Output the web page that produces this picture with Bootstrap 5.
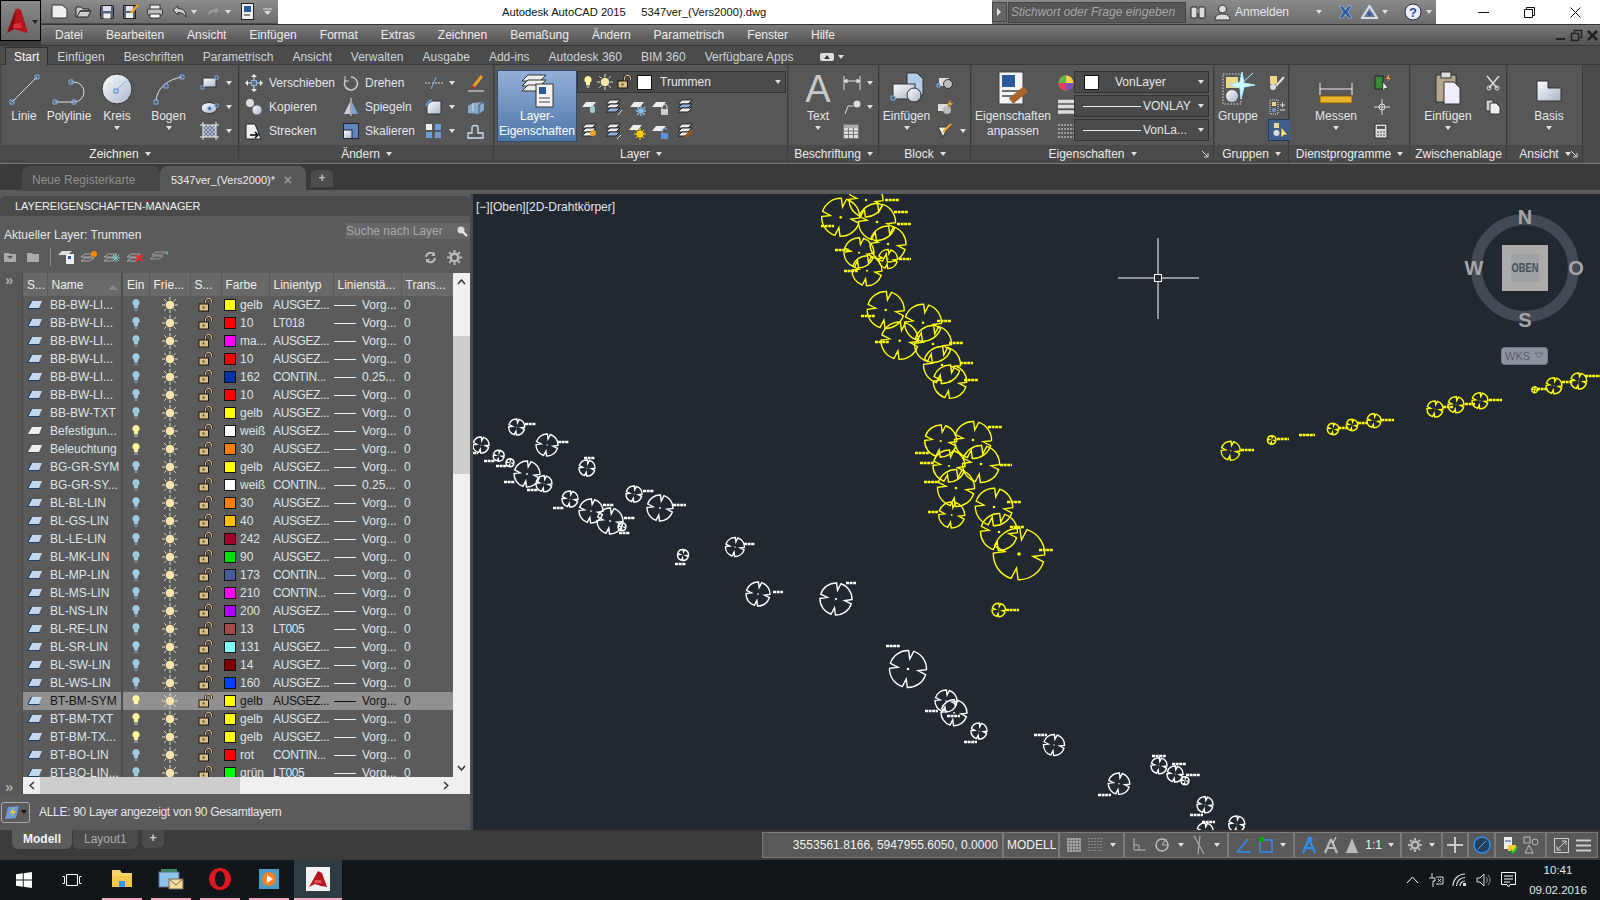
<!doctype html>
<html lang="de"><head><meta charset="utf-8"><title>Autodesk AutoCAD 2015</title>
<link href="https://cdn.jsdelivr.net/npm/bootstrap@5.3.0/dist/css/bootstrap.min.css" rel="stylesheet">
<style>
html,body{height:100%;overflow:hidden}
body{font:12px/16px "Liberation Sans","Noto Sans",sans-serif;background:#3b3b3b;color:#e4e6e8;width:1600px;height:900px}
svg{display:block;flex:none}
.crt{display:inline-block;width:0;height:0;border-left:3.5px solid transparent;border-right:3.5px solid transparent;border-top:4px solid #e0e0e0;flex:none}
.top{height:45px}
.appbtn{width:41px;height:41px;background:linear-gradient(#8a8a8a,#666);border:1px solid #000;flex:none}
.appbtn .crt{border-top-color:#222;margin-left:3px;margin-top:2px}
.tb1{height:24px;background:#fff}
.qat{width:237px;height:24px;background:linear-gradient(#8c8c8c,#6d6d6d);padding-left:6px;border-bottom:1px solid #4a4a4a}
.qs{width:24px;height:24px}
.ttl{color:#111;font-size:11.2px;padding-left:224px;width:714px;white-space:pre}
.srch{width:444px;height:24px;background:linear-gradient(#8a8a8a,#6c6c6c)}
.srbtn{width:15px;height:20px;background:#666;border:1px solid #444;margin-right:1px}
.srbtn b{display:block;width:0;height:0;border-left:4px solid #ddd;border-top:4px solid transparent;border-bottom:4px solid transparent;margin:5px 0 0 4px}
.sfld{width:178px;height:21px;background:#565656;border:1px solid #454545;font-style:italic;color:#a8a8a8;padding-left:2px;line-height:19px;white-space:nowrap;overflow:hidden}
.wctl{width:164px;height:24px;color:#111;padding-right:2px}
.wctl>div{width:46px}
.mnu{height:21px;background:linear-gradient(#7a7a7a,#515151);gap:23px;flex:1;border-top:1px solid #333;color:#ececec;padding-left:14px}
.mnuw{gap:4px;margin-left:auto;margin-right:2px}
.rtabs{height:20px;background:#4b4b4b;border-top:1px solid #383838;border-bottom:1px solid #383838;padding:3px 0 0 5px;gap:19px;color:#cfd5d8}
.rtab-on{background:#565656;color:#fff;border:1px solid #2e2e2e;border-bottom:0;padding:0 8px;height:19px;margin-right:-10px;margin-top:-1px;line-height:18px}
.rib{height:98px;background:#4b4b4b;padding-left:2px;gap:1px}
.pnl{background:#575757;border-right:1px solid #3d3d3d}
.pb{height:80px;padding-top:6px}
.pf{height:18px;background:#4a4a4a;gap:6px;color:#ebebeb;position:relative;line-height:18px;white-space:nowrap}
.corn{position:absolute;right:4px;top:5px}
.big{height:74px;flex:none;line-height:15px;text-align:center}
.big .bic{height:38px}
.big .crt{margin-top:2px}
.bglyph{font:38px/36px "Liberation Sans",sans-serif;color:#c8c8c8;height:38px}
.smc{gap:0;flex:none}
.sr{height:24px;gap:6px;white-space:nowrap}
.drp{height:22px;background:#4a4a4a;border:1px solid #333;margin-bottom:2px;padding:0 5px;position:relative;white-space:nowrap}
.drp1{margin-bottom:3px}
.drp .crt{position:absolute;right:4px;top:8px}
.sw0{width:15px;height:15px;background:#fff;border:1px solid #111;flex:none}
.lbtn{background:linear-gradient(#92b0d8,#4e76a8);border:1px solid #2f4b72;height:72px;color:#fff;margin:-1px 0 0 2px}
.actbtn{background:#3e5f8e;border:1px solid #27395a}
.w44{width:44px}.w46{width:46px}.w50{width:50px}.w53{width:53px}
.w98{width:98px}.w82{width:82px}.w42{width:42px}.w30{width:30px}
.p237{width:237px}.p254{width:254px}.p293{width:293px}.p90{width:90px}.p91{width:91px}.p242{width:242px}.p74{width:74px}.p120{width:120px}.p96{width:96px}.p75{width:75px}
.sq80{width:80px}.w212{width:209px}.w24{width:24px}.w20{width:20px}.w56{width:56px}.w34{width:34px}
.w60{width:60px}.w66{width:66px}.w26{width:26px}.w92{width:92px}
.ptl1{padding-left:3px}.ptl2{padding-left:5px}
.sl4{margin-left:4px}
.ml8n{margin-left:-8px}
.dtabs{height:27px;background:#3a3a3a;padding:2px 0 0 22px;border-top:1px solid #777}
.dt{height:25px;line-height:28px;border-radius:8px 8px 0 0}
.dt1{width:138px;background:#474747;color:#8f8f8f;padding-left:10px}
.dt2{width:146px;background:#585858;color:#eee;padding:0 14px 0 11px;font-size:11px}
.dt2 .cls{font-size:14px;color:#999;font-weight:700}
.dt3{width:22px;height:17px;margin:4px 0 0 5px;background:#4d4d4d;border-radius:5px 5px 0 0;color:#bbb;line-height:16px;text-align:center;font-weight:700}
.gstrip{height:4px;background:#5b5b5b}
.work{height:636px}
.lp{width:473px;flex:none;background:#5b5b5b;padding-top:2px;border-right:3px solid #4a4a4a}
.lpt{height:20px;background:#4a4a4a;border-radius:5px 5px 0 0;padding-left:15px;line-height:20px;color:#eee;font-size:11px;letter-spacing:-.1px}
.lph{height:30px;padding:7px 0 0 4px}
.lph>.akt{margin-top:4px}
.lps{width:124px;height:16px;background:#666;color:#a9a9a9;line-height:16px;margin-left:auto;position:relative}
.lps svg{position:absolute;right:2px;top:2px}
.lpb{height:27px;padding:0 0 5px 3px}
.lpb>span{width:23px}
.lpb>span.lsep{width:1px;height:18px;margin:0 6px 0 1px;background:#8a8a8a}
.gut{width:23px;background:#575757;border-right:1px solid #4c4c4c;color:#aaa;font-weight:700;font-size:15px;line-height:14px;height:521px}
.gut .g1{padding:0 0 0 5px;height:14px}
.lwin{height:504px;width:430px;overflow:hidden;flex:none}
.vsb{width:17px;height:504px;background:#f0f0f0;position:relative}
.vth{position:absolute;left:0;right:0;top:63px;height:138px;background:#cdcdcd}
.arw{position:absolute;left:4px;top:6px}
.arw2{position:absolute;left:4px;bottom:6px}
.hsb{height:17px;width:447px;background:#f0f0f0;position:relative}
.hth{position:absolute;left:17px;top:0;bottom:0;width:200px;background:#cdcdcd}
.arh1{position:absolute;left:6px;top:4px}.arh2{position:absolute;right:21px;top:4px}
.lyr.table{table-layout:fixed;width:430px;margin:0;--bs-table-bg:transparent;border:0}
.lyr.table th,.lyr.table td{padding:0;border:0;background:transparent;white-space:nowrap;overflow:hidden;vertical-align:middle;box-shadow:none}
.lyr.table td{height:18px;line-height:18px;color:#dde5ea;font-weight:400}
.lyr.table th{height:23px;background:#696969;color:#eee;font-weight:400;border-right:1px solid #5a5a5a;padding-left:4px}
.lyr.table td svg{margin:auto}
.lyr.table td.nm{padding-left:3px}
.lyr.table td.cdv,.lyr.table th.cdv{border-left:2px solid #4c4c4c}
.lyr.table td.cl{padding-left:3px}
.lyr.table td.lt{padding-left:4px;letter-spacing:-.35px}
.lyr.table td.lw{padding-left:1px}
.lyr.table td.tr0{padding-left:3px}
.lyr.table tr.sel td{background:#909090;color:#141414}
.sortm{float:right;margin:8px 3px 0 0;border-left:5px solid transparent;border-right:5px solid transparent;border-bottom:5px solid #888;width:0;height:0}
.sw{display:inline-block;width:12px;height:12px;border:1px solid #111;vertical-align:-2px;margin-right:4px}
.ln{display:inline-block;width:22px;height:0;border-top:1px solid #f0f0f0;vertical-align:3px;margin-right:6px}
.ln2{display:inline-block;width:58px;height:0;border-top:1px solid #f0f0f0;margin:0 2px 0 3px;flex:none}
tr.sel .ln{border-top-color:#111}
.sy{background:#ff0}.sr0{background:#f00}.sm{background:#f0f}.sw1{background:#fff}.s162{background:#0033a8}.s30{background:#ff7f00}.s40{background:#ffbf00}.s242{background:#a5002c}.s90{background:#00e000}.s173{background:#4a5a9a}.s210{background:#f0f}.s200{background:#b000ff}.s13{background:#a04a4a}.s131{background:#7fffff}.s14{background:#7f0000}.s160{background:#0040ff}.sg{background:#0f0}
.lpst{height:36px;padding-left:1px;gap:9px;letter-spacing:-.3px}
.fbtn{width:29px;height:21px;background:#5b5b5b;border:1px solid #aaa;border-radius:3px;padding-left:2px;gap:1px}
.fbtn .crt{border-top-color:#111}
.cnv{position:relative;flex:1;background:#212830;overflow:hidden}
.cnv svg text{font-family:"Liberation Sans",sans-serif}
.lrow{height:30px;background:#3b3b3b}
.ltab{height:17px;margin-top:2px;line-height:17px}
.lt1{width:60px;margin-left:12px;background:#5c5c5c;color:#f2f2f2;font-weight:700;text-align:center;border-radius:0 0 6px 6px;height:19px;margin-top:0;line-height:19px}
.lt2{width:65px;margin-left:1px;background:#4b4b4b;color:#aaa;padding-left:11px;border-radius:0 0 6px 6px;height:19px;margin-top:0;line-height:19px}
.lt3{width:22px;margin-left:4px;background:#4b4b4b;border-radius:0 0 5px 5px;text-align:center;font-weight:700;color:#ccc;height:18px;margin-top:0}
.sbar{height:26px;background:#595959;margin:2px 2px 0 0;border:1px solid #7a7a7a;color:#f2f2f2;white-space:nowrap}
.sg1{height:100%;border-right:2px solid #7a7a7a;justify-content:space-around;padding:0 3px;align-items:center;display:flex;flex:none}
.sg1:last-child{border-right:0}
.w241{width:241px;justify-content:flex-end!important;padding-right:4px!important;letter-spacing:.05px}.w55{width:56px}.w63{width:65px}.w104{width:104px}.w64{width:66px}.w106{width:107px}.w40{width:41px}.w25{width:26px}.w27{width:27px}.w51{width:51px}.w49{width:50px}
.tbar{height:40px;background:#101619}
.tslot{width:48px}
.tapp{width:40px;margin-right:9px;height:40px;border-bottom:2px solid #f4a9c2}
.tmg{margin-left:6px}
.tcur{width:48px;margin-left:-4px;background:#2f3c42;margin-right:0}
.try{width:24px}
.clk{width:66px;margin:0 9px 0 5px;font-size:11.5px;line-height:20px;text-align:center;color:#e8e8e8}
.ylw{color:#ff0}.c1{width:24px}.c2{width:75px}.c3{width:27px}.c4{width:41px}.c5{width:31px}.c6{width:48px}.c7{width:64px}.c8{width:68px}.c9{width:52px}
</style></head><body>
<svg width="0" height="0" class="position-absolute"><defs>
<symbol id="ly" viewBox="0 0 16 10"><polygon points="5,1 15,1 12,8 1,8" fill="#c3d8ef"/><path d="M1 8.5H12.5M4.500 1 .8 8" stroke="#17406f" stroke-width="1.100" fill="none"/></symbol>
<symbol id="lyw" viewBox="0 0 16 10"><polygon points="5,1 15,1 12,8 1,8" fill="#eee"/><path d="M1 8.500H12.500" stroke="#444" fill="none"/></symbol>
<symbol id="bb" viewBox="0 0 10 14"><path d="M5 1a3.700 3.700 0 0 1 2 6.800V10H3V7.800A3.700 3.700 0 0 1 5 1z" fill="#9ccbe6"/><rect x="3.500" y="10" width="3" height="3" fill="#7a8a96"/></symbol>
<symbol id="by" viewBox="0 0 10 14"><path d="M5 1a3.700 3.700 0 0 1 2 6.800V10H3V7.800A3.700 3.700 0 0 1 5 1z" fill="#fff6a0"/><rect x="3.500" y="10" width="3" height="3" fill="#999"/></symbol>
<symbol id="sn" viewBox="0 0 16 16"><path d="M8 0V3M8 13V16M0 8H3M13 8H16M2.300 2.300 4.400 4.400M11.600 11.600 13.700 13.700M2.300 13.700 4.400 11.600M11.600 4.400 13.700 2.300" stroke="#ddd"/><circle cx="8" cy="8" r="4.300" fill="#f6e6ac"/></symbol>
<symbol id="lk" viewBox="0 0 16 14"><path d="M7.500 6V3.500A3 3 0 0 1 13.500 3.500V5" fill="none" stroke="#111" stroke-width="2.600"/><path d="M7.500 6V3.500A3 3 0 0 1 13.500 3.500V5" fill="none" stroke="#d9c08c" stroke-width="1.200"/><rect x="1" y="6" width="9.500" height="7" fill="#d9c08c" stroke="#1c1408"/><rect x="4.500" y="8.500" width="2" height="2" fill="#5a4a20"/></symbol>
<g id="tr"><path vector-effect="non-scaling-stroke" fill="none" stroke="currentColor" stroke-width="1.400" d="M30.900-95.100A100 100 0 0 1 99.900 3.500L54.200 9.600 95.100 30.900A100 100 0 0 1-3.500 99.900L-9.600 54.200-30.900 95.100A100 100 0 0 1-99.900-3.500L-54.200-9.600-95.100-30.900A100 100 0 0 1 3.500-99.900L9.600-54.200Z"/><circle r="7" fill="currentColor"/></g>
<linearGradient id="gd" x1="0" y1="0" x2="1" y2="1"><stop offset="0" stop-color="#fff"/><stop offset="1" stop-color="#a8b4c8"/></linearGradient>
</defs></svg>

<div class="d-flex top">
 <div class="appbtn d-flex align-items-center ps-1">
  <svg width="24" height="28" viewBox="0 0 24 28"><polygon points="12,1 16,3 23,26 15,24 9,22 2,26" fill="#b4161b"/><polygon points="11,1 2,26 9,22" fill="#8a0d12"/><polygon points="9,17 16,16 17,21 8,21" fill="#d9313a"/></svg>
  <span class="crt"></span>
 </div>
 <div class="flex-grow-1 d-flex flex-column">
  <div class="d-flex tb1">
   <div class="qat d-flex align-items-center">
    <span class="qs d-flex align-items-center justify-content-center"><svg width="17" height="17" viewBox="0 0 17 17"><path d="M1 2H11L16 6V15H1Z" fill="#eee" stroke="#333"/></svg></span>
    <span class="qs d-flex align-items-center justify-content-center"><svg width="17" height="14" viewBox="0 0 17 14"><path d="M1 2H6L8 4H14V6H5L2 12H1ZM5 6H16L13 12H2" fill="#ccc" stroke="#222"/></svg></span>
    <span class="qs d-flex align-items-center justify-content-center"><svg width="14" height="14" viewBox="0 0 14 14"><rect x=".5" y=".5" width="13" height="13" rx="1" fill="#567" stroke="#222"/><rect x="3" y="1" width="8" height="5" fill="#dde"/><rect x="3.500" y="8.500" width="7" height="5" fill="#eee"/></svg></span>
    <span class="qs d-flex align-items-center justify-content-center"><svg width="16" height="15" viewBox="0 0 16 15"><rect x=".5" y="1.500" width="12" height="13" fill="#567" stroke="#222"/><rect x="3" y="2" width="7" height="5" fill="#dde"/><rect x="3" y="9" width="7" height="5" fill="#eee"/><path d="M8 9 15 1" stroke="#f0a020" stroke-width="2.500"/></svg></span>
    <span class="qs d-flex align-items-center justify-content-center"><svg width="16" height="15" viewBox="0 0 16 15"><rect x="3" y="1" width="10" height="5" fill="#eee" stroke="#333"/><rect x=".5" y="5" width="15" height="6" rx="1" fill="#bbb" stroke="#333"/><rect x="3" y="10" width="10" height="4" fill="#fff" stroke="#333"/></svg></span>
    <span class="qs d-flex align-items-center justify-content-center"><svg width="15" height="13" viewBox="0 0 15 13"><path d="M1 5 6 1V3.500C12 3.500 14 7 14 12 12 9 10 7.500 6 7.500V10Z" fill="#ccc" stroke="#333"/></svg></span>
    <span class="crt"></span><span class="qs sl4 d-flex align-items-center justify-content-center"><svg width="15" height="13" viewBox="0 0 15 13"><path d="M14 5 9 1V3.500C3 3.500 1 7 1 12 3 9 5 7.500 9 7.500V10Z" fill="#999" stroke="#777"/></svg></span>
    <span class="crt"></span><span class="qs sl4 d-flex align-items-center justify-content-center"><svg width="13" height="17" viewBox="0 0 13 17"><rect x=".5" y=".5" width="12" height="16" fill="#eee" stroke="#222"/><rect x="3" y="3" width="7" height="6" fill="#2a5a9a"/><path d="M3 12H9" stroke="#222"/></svg></span>
    <span class="d-flex flex-column align-items-center ms-1"><svg width="9" height="8" viewBox="0 0 9 8"><path d="M0 1H9" stroke="#ddd"/><path d="M1 3H8L4.500 7Z" fill="#ddd"/></svg></span>
   </div>
   <div class="ttl d-flex align-items-center">Autodesk AutoCAD 2015     5347ver_(Vers2000).dwg</div>
   <div class="srch d-flex align-items-center">
    <div class="srbtn"><b></b></div>
    <div class="sfld">Stichwort oder Frage eingeben</div>
    <span class="ms-1 me-2"><svg width="16" height="16" viewBox="0 0 16 16"><rect x="1" y="3" width="6" height="11" rx="1" fill="#ddd" stroke="#222"/><rect x="9" y="3" width="6" height="11" rx="1" fill="#ddd" stroke="#222"/><rect x="6" y="5" width="4" height="4" fill="#888"/></svg></span>
    <span><svg width="17" height="17" viewBox="0 0 17 17"><circle cx="8.500" cy="5" r="4" fill="#ddd" stroke="#333"/><path d="M1 16C1 11 5 10 8.500 10S16 11 16 16Z" fill="#ddd" stroke="#333"/></svg></span>
    <span class="ms-1">Anmelden</span>
    <span class="crt ms-auto"></span>
    <span class="ms-3"><svg width="15" height="14" viewBox="0 0 15 14"><path d="M1 1H5L7.500 5 10 1H14L9.800 7 14 13H10L7.500 9 5 13H1L5.200 7Z" fill="#2b5ca8" stroke="#c8d8ea" stroke-width=".5"/></svg></span>
    <span class="ms-2"><svg width="17" height="15" viewBox="0 0 17 15"><path d="M8.500 1 16 13H1Z" fill="none" stroke="#cfe0f5" stroke-width="2.200"/><circle cx="8.500" cy="9" r="2" fill="#2b5ca8"/></svg></span>
    <span class="crt ms-1"></span>
    <span class="ms-3"><svg width="18" height="18" viewBox="0 0 18 18"><circle cx="9" cy="9" r="8" fill="#eef" stroke="#234"/><text x="9" y="14" text-anchor="middle" font-size="13" font-weight="700" fill="#1f4fa0" font-family="Liberation Sans">?</text></svg></span>
    <span class="crt ms-1 me-1"></span>
   </div>
   <div class="wctl d-flex align-items-center justify-content-end">
    <div class="d-flex justify-content-center"><svg width="11" height="11" viewBox="0 0 11 11"><path d="M0 5.500H11" stroke="#111"/></svg></div>
    <div class="d-flex justify-content-center"><svg width="11" height="11" viewBox="0 0 11 11"><path d="M.5 2.500H8.500V10.500H.5ZM2.500 2.500V.5H10.500V8.500H8.500" fill="none" stroke="#111"/></svg></div>
    <div class="d-flex justify-content-center"><svg width="11" height="11" viewBox="0 0 11 11"><path d="M.5.5 10.500 10.500M10.500.5 .5 10.500" stroke="#111"/></svg></div>
   </div>
  </div>
  <div class="mnu d-flex align-items-center">
   <span>Datei</span><span>Bearbeiten</span><span>Ansicht</span><span>Einfügen</span><span>Format</span><span>Extras</span><span>Zeichnen</span><span>Bemaßung</span><span>Ändern</span><span>Parametrisch</span><span>Fenster</span><span>Hilfe</span>
   <span class="d-flex mnuw align-items-center"><svg width="11" height="11" viewBox="0 0 11 11"><path d="M1 9H10" stroke="#222" stroke-width="2"/></svg><svg width="13" height="13" viewBox="0 0 13 13"><path d="M1.500 4.500H8.500V11.500H1.500ZM4.500 4.500V1.500H11.500V8.500H8.500" fill="none" stroke="#222" stroke-width="1.500"/></svg><svg width="11" height="11" viewBox="0 0 11 11"><path d="M1 1 10 10M10 1 1 10" stroke="#222" stroke-width="2.500"/></svg></span>
  </div>
 </div>
</div>
<div class="rtabs d-flex align-items-center">
 <span class="rtab-on">Start</span><span>Einfügen</span><span>Beschriften</span><span>Parametrisch</span><span>Ansicht</span><span>Verwalten</span><span>Ausgabe</span><span>Add-ins</span><span>Autodesk 360</span><span>BIM 360</span><span>Verfügbare Apps</span>
 <span class="d-flex align-items-center gap-1 ms-2"><svg width="14" height="8" viewBox="0 0 14 8"><rect width="14" height="8" rx="2" fill="#ddd"/><path d="M7 2 10 6H4Z" fill="#333"/></svg><span class="crt"></span></span>
</div>
<div class="rib d-flex">
 <div class="pnl p237"><div class="pb d-flex">
  <div class="big w44 d-flex flex-column align-items-center"><div class="bic"><svg width="36" height="36" viewBox="0 0 36 36"><path d="M6 31 31 6" stroke="#ddd"/><path d="M4 29h4v4H4zM29 4h4v4h-4z" fill="none" stroke="#7fb2f0"/></svg></div><span>Linie</span></div>
  <div class="big w46 d-flex flex-column align-items-center"><div class="bic"><svg width="36" height="36" viewBox="0 0 36 36"><path d="M4 31H23A10 10 0 0 0 23 11H20" stroke="#ddd" fill="none"/><path d="M2 29h4v4H2zM21 29h4v4h-4zM18 9h4v4h-4z" fill="none" stroke="#7fb2f0"/></svg></div><span>Polylinie</span></div>
  <div class="big w50 d-flex flex-column align-items-center"><div class="bic"><svg width="36" height="36" viewBox="0 0 36 36"><circle cx="18" cy="18" r="15" fill="url(#gd)" stroke="#333"/><path d="M17 20 27 10" stroke="#7fb2f0"/><path d="M15 18h4v4h-4z" fill="none" stroke="#4b86d8"/></svg></div><span>Kreis</span><span class="crt"></span></div>
  <div class="big w53 d-flex flex-column align-items-center"><div class="bic"><svg width="36" height="36" viewBox="0 0 36 36"><path d="M5 30C6 16 18 8 31 6" stroke="#ddd" fill="none"/><path d="M3 29h4v4H3zM13 13h4v4h-4zM29 4h4v4h-4z" fill="none" stroke="#7fb2f0"/></svg></div><span>Bogen</span><span class="crt"></span></div>
  <div class="smc ptl2">
   <div class="sr d-flex align-items-center"><svg width="20" height="18" viewBox="0 0 20 18"><rect x="3" y="4" width="13" height="9" fill="url(#gd)" stroke="#333"/><path d="M1 12h3v3H1zM15 2h3v3h-3z" fill="#444" stroke="#7fb2f0"/></svg><span class="crt"></span></div>
   <div class="sr d-flex align-items-center"><svg width="20" height="18" viewBox="0 0 20 18"><ellipse cx="9" cy="10" rx="8" ry="5.500" fill="url(#gd)" stroke="#333"/><path d="M8 9h3v3H8zM15 6h3v3h-3z" fill="#444" stroke="#7fb2f0"/></svg><span class="crt"></span></div>
   <div class="sr d-flex align-items-center"><svg width="20" height="18" viewBox="0 0 20 18"><rect x="3" y="3" width="13" height="12" fill="#a9b8d8"/><path d="M3 7 7 3M3 11 11 3M3 15 15 3M7 15 16 6M11 15 16 10M3 5 13 15M3 9 9 15M5 3 16 14M9 3 16 10" stroke="#555" stroke-width=".6"/><path d="M0 3H19M0 15H19M3 0V18M16 0V18" stroke="#eee"/></svg><span class="crt"></span></div>
  </div>
 </div><div class="pf d-flex justify-content-center align-items-center">Zeichnen <span class="crt"></span></div></div>
 <div class="pnl p254"><div class="pb d-flex ptl2">
  <div class="smc w98">
   <div class="sr d-flex align-items-center"><svg width="18" height="18" viewBox="0 0 18 18"><path d="M9 0 12 3H6ZM9 18 6 15H12ZM0 9 3 6V12ZM18 9 15 12V6Z" fill="#e8e8e8"/><path d="M9 3V15M3 9H15" stroke="#e8e8e8"/><rect x="6.500" y="6.500" width="5" height="5" fill="#6a6a6a" stroke="#7fb2f0"/></svg>Verschieben</div>
   <div class="sr d-flex align-items-center"><svg width="18" height="18" viewBox="0 0 18 18"><circle cx="5" cy="5" r="4" fill="#ddd"/><circle cx="12" cy="12" r="5" fill="url(#gd)" stroke="#667"/></svg>Kopieren</div>
   <div class="sr d-flex align-items-center"><svg width="18" height="18" viewBox="0 0 18 18"><path d="M1 2H10L16 17H1Z" fill="#eee" stroke="#222"/><path d="M5 13H13M10 10 13 13 10 16" stroke="#000" stroke-width="1.500" fill="none"/></svg>Strecken</div>
  </div>
  <div class="smc w82">
   <div class="sr d-flex align-items-center"><svg width="16" height="16" viewBox="0 0 16 16"><path d="M8 2A6.500 6.500 0 1 1 2.500 5" fill="none" stroke="#ccc" stroke-width="1.500"/><path d="M2 1V6H6" fill="none" stroke="#ccc"/></svg>Drehen</div>
   <div class="sr d-flex align-items-center"><svg width="16" height="18" viewBox="0 0 16 18"><path d="M8 0V18" stroke="#eee"/><path d="M7 4V16H1Z" fill="#ccd"/><path d="M9 4V16H15Z" fill="#7fa3cf"/></svg>Spiegeln</div>
   <div class="sr d-flex align-items-center"><svg width="16" height="16" viewBox="0 0 16 16"><rect x=".5" y=".5" width="15" height="15" fill="#5f86b8" stroke="#223"/><rect x=".5" y="7" width="8.500" height="8.500" fill="url(#gd)" stroke="#223"/></svg>Skalieren</div>
  </div>
  <div class="smc w42">
   <div class="sr d-flex align-items-center"><svg width="18" height="16" viewBox="0 0 18 16"><path d="M0 8H5M7 8H18" stroke="#ddd" stroke-dasharray="2 1"/><path d="M6 14 11 2" stroke="#7fb2f0"/></svg><span class="crt"></span></div>
   <div class="sr d-flex align-items-center"><svg width="18" height="16" viewBox="0 0 18 16"><path d="M2 15V9C2 5 5 2 9 2H16V15Z" fill="url(#gd)" stroke="#333"/><path d="M1 7C2 4 4 2 7 1" stroke="#5b93dc" stroke-width="2" fill="none"/></svg><span class="crt"></span></div>
   <div class="sr d-flex align-items-center"><svg width="18" height="16" viewBox="0 0 18 16"><rect x="1" y="1" width="6" height="6" fill="#eee"/><rect x="10" y="1" width="6" height="6" fill="#6f9ad8"/><rect x="1" y="9" width="6" height="6" fill="#6f9ad8"/><rect x="10" y="9" width="6" height="6" fill="#6f9ad8"/></svg><span class="crt"></span></div>
  </div>
  <div class="smc w30">
   <div class="sr d-flex align-items-center"><svg width="18" height="18" viewBox="0 0 18 18"><path d="M6 13 15 2" stroke="#f2a020" stroke-width="3"/><path d="M3 15 6 11 8 14Z" fill="#a33"/><path d="M1 17H17" stroke="#eee"/></svg></div>
   <div class="sr d-flex align-items-center"><svg width="18" height="16" viewBox="0 0 18 16"><path d="M1 7 6 4 17 3V11L12 15 1 14Z" fill="#8aa7cc"/><path d="M6 4V12" stroke="#ddd"/><path d="M12 6V15M12 6 17 3" stroke="#456" /></svg></div>
   <div class="sr d-flex align-items-center"><svg width="18" height="16" viewBox="0 0 18 16"><path d="M1 15V10H5V4C5 2 11 2 11 4V10H16V15Z" fill="none" stroke="#cfe0f5" stroke-width="1.300"/></svg></div>
  </div>
 </div><div class="pf d-flex justify-content-center align-items-center">Ändern <span class="crt"></span></div></div>
 <div class="pnl p293"><div class="pb d-flex">
  <div class="big lbtn sq80 d-flex flex-column align-items-center"><div class="bic"><svg width="36" height="38" viewBox="0 0 36 38"><g stroke="#333"><polygon points="9,4 27,4 21,10 3,10" fill="#eee"/><polygon points="9,9 27,9 21,15 3,15" fill="#eee"/><polygon points="9,14 27,14 21,20 3,20" fill="#eee"/></g><rect x="17" y="13" width="17" height="23" fill="#f4f4f4" stroke="#333"/><rect x="20" y="16" width="7" height="7" fill="#2a5a9a"/><path d="M20 27H31M20 31H31" stroke="#444"/></svg></div><span>Layer-</span><span>Eigenschaften</span></div>
  <div class="w212">
   <div class="drp drp1 d-flex align-items-center gap-1"><svg width="10" height="14"><use href="#by"/></svg><svg width="16" height="16"><use href="#sn"/></svg><svg width="16" height="14"><use href="#lk"/></svg><span class="sw0"></span><span class="ms-1">Trummen</span><span class="crt"></span></div>
   <div class="d-flex">
    <span class="w24 sr d-flex align-items-center justify-content-center"><svg width="20" height="18" viewBox="0 0 20 18"><polygon points="7,3 17,3 13,8 3,8" fill="#eee"/><rect x="11" y="7" width="5" height="7" rx="2" fill="#9cc"/></svg></span>
    <span class="w24 sr d-flex align-items-center justify-content-center"><svg width="20" height="18" viewBox="0 0 20 18"><g stroke="#222"><polygon points="7,1 17,1 13,5 3,5" fill="#eee"/><polygon points="7,5 17,5 13,9 3,9" fill="#eee"/><polygon points="7,9 17,9 13,13 3,13" fill="#8ab0e0"/></g><path d="M19 11 15 16" stroke="#ddd"/></svg></span>
    <span class="w24 sr d-flex align-items-center justify-content-center"><svg width="20" height="18" viewBox="0 0 20 18"><polygon points="7,3 17,3 13,8 3,8" fill="#eee"/><path d="M14 7V17M9 12H19M10 8 18 16M18 8 10 16" stroke="#8ac0f0" stroke-width="1.300"/></svg></span>
    <span class="w24 sr d-flex align-items-center justify-content-center"><svg width="20" height="18" viewBox="0 0 20 18"><polygon points="5,3 15,3 11,8 1,8" fill="#eee"/><path d="M11 10V8A2.500 2.500 0 0 1 16 8V10" fill="none" stroke="#ddd"/><rect x="10" y="10" width="7" height="6" fill="#ccc"/></svg></span>
    <span class="w24 sr d-flex align-items-center justify-content-center"><svg width="20" height="18" viewBox="0 0 20 18"><g stroke="#222"><polygon points="7,1 17,1 13,5 3,5" fill="#eee"/><polygon points="7,5 17,5 13,9 3,9" fill="#8ab0e0"/><polygon points="7,9 17,9 13,13 3,13" fill="#eee"/></g></svg></span>
   </div>
   <div class="d-flex">
    <span class="w24 sr d-flex align-items-center justify-content-center"><svg width="20" height="18" viewBox="0 0 20 18"><g stroke="#222"><polygon points="7,1 17,1 13,5 3,5" fill="#eee"/><polygon points="7,5 17,5 13,9 3,9" fill="#eee"/><polygon points="7,9 17,9 13,13 3,13" fill="#eee"/></g><circle cx="14" cy="10" r="3" fill="#f5a020"/></svg></span>
    <span class="w24 sr d-flex align-items-center justify-content-center"><svg width="20" height="18" viewBox="0 0 20 18"><g stroke="#222"><polygon points="7,1 17,1 13,5 3,5" fill="#eee"/><polygon points="7,5 17,5 13,9 3,9" fill="#eee"/><polygon points="7,9 17,9 13,13 3,13" fill="#8ab0e0"/></g><path d="M14 16 18 12" stroke="#ddd"/></svg></span>
    <span class="w24 sr d-flex align-items-center justify-content-center"><svg width="20" height="18" viewBox="0 0 20 18"><polygon points="6,2 15,2 11,7 2,7" fill="#eee"/><circle cx="13" cy="11" r="3.500" fill="#fc0"/><path d="M13 5V17M7 11H19M9 7 17 15M17 7 9 15" stroke="#fc0"/></svg></span>
    <span class="w24 sr d-flex align-items-center justify-content-center"><svg width="20" height="18" viewBox="0 0 20 18"><polygon points="5,3 15,3 11,8 1,8" fill="#eee"/><path d="M11 10V8A2.500 2.500 0 0 1 16 7" fill="none" stroke="#7fb2f0"/><rect x="10" y="10" width="7" height="6" fill="#5b93dc"/></svg></span>
    <span class="w24 sr d-flex align-items-center justify-content-center"><svg width="20" height="18" viewBox="0 0 20 18"><g stroke="#222"><polygon points="7,1 17,1 13,5 3,5" fill="#eee"/><polygon points="7,5 17,5 13,9 3,9" fill="#eee"/><polygon points="7,9 17,9 13,13 3,13" fill="#eee"/></g><path d="M10 14 17 8" stroke="#9a5a1c" stroke-width="3"/></svg></span>
   </div>
  </div>
 </div><div class="pf d-flex justify-content-center align-items-center">Layer <span class="crt"></span></div></div>
 <div class="pnl p90"><div class="pb d-flex">
  <div class="big w50 sl4 d-flex flex-column align-items-center"><div class="bglyph">A</div><span>Text</span><span class="crt"></span></div>
  <div class="smc w34">
   <div class="sr d-flex align-items-center"><svg width="18" height="16" viewBox="0 0 18 16"><path d="M1 1V15M17 1V15M1 6H17M1 6 4 4V8ZM17 6 14 4V8Z" stroke="#ddd" fill="#ddd"/></svg><span class="crt"></span></div>
   <div class="sr d-flex align-items-center"><svg width="18" height="16" viewBox="0 0 18 16"><path d="M2 15 5 7H10" stroke="#ddd" fill="none"/><circle cx="14" cy="5" r="3.500" fill="#ddd"/></svg><span class="crt"></span></div>
   <div class="sr d-flex align-items-center"><svg width="16" height="16" viewBox="0 0 16 16"><rect x=".5" y="1.500" width="15" height="14" fill="#ddd" stroke="#777"/><rect x="1" y="2" width="14" height="3" fill="#aaa"/><path d="M1 8H15M1 11.500H15M5.500 5V15M10.500 5V15" stroke="#777"/></svg></div>
  </div>
 </div><div class="pf d-flex justify-content-center align-items-center">Beschriftung <span class="crt"></span></div></div>
 <div class="pnl p91"><div class="pb d-flex">
  <div class="big w53 d-flex flex-column align-items-center"><div class="bic"><svg width="34" height="36" viewBox="0 0 34 36"><path d="M17 2H27L33 8V24H17Z" fill="#b6cdea" stroke="#333"/><rect x="3" y="13" width="22" height="15" fill="url(#gd)" stroke="#333"/><circle cx="24" cy="24" r="7" fill="url(#gd)" stroke="#333"/><path d="M1 25h4v4H1z" fill="#555" stroke="#7fb2f0"/></svg></div><span>Einfügen</span><span class="crt"></span></div>
  <div class="smc w34 ptl1">
   <div class="sr d-flex align-items-center"><svg width="18" height="16" viewBox="0 0 18 16"><rect x="3" y="3" width="10" height="8" fill="#ddd"/><circle cx="12" cy="9" r="4.500" fill="#bbb" stroke="#333"/><path d="M1 9h3v3H1z" fill="#555" stroke="#7fb2f0"/></svg></div>
   <div class="sr d-flex align-items-center"><svg width="18" height="16" viewBox="0 0 18 16"><rect x="2" y="5" width="10" height="7" fill="#ddd"/><circle cx="11" cy="11" r="4" fill="#bbb"/><path d="M15 0 11 6H14L12 10 17 4H14Z" fill="#f5a020"/></svg></div>
   <div class="sr d-flex align-items-center"><svg width="18" height="16" viewBox="0 0 18 16"><path d="M2 4H12L7 14Z" fill="#eee" stroke="#333"/><path d="M7 9 15 1" stroke="#f5a020" stroke-width="2"/></svg><span class="crt"></span></div>
  </div>
 </div><div class="pf d-flex justify-content-center align-items-center">Block <span class="crt"></span></div></div>
 <div class="pnl p242"><div class="pb d-flex">
  <div class="big w82 d-flex flex-column align-items-center"><div class="bic"><svg width="36" height="36" viewBox="0 0 36 36"><rect x="4" y="1" width="24" height="32" fill="#f4f4f4" stroke="#444"/><rect x="7" y="4" width="13" height="12" fill="#2a5a9a"/><path d="M7 20H24M7 25H18" stroke="#444" stroke-width="1.500"/><path d="M16 30 31 18" stroke="#a8642a" stroke-width="7"/></svg></div><span>Eigenschaften</span><span>anpassen</span></div>
  <div class="d-flex flex-grow-1">
   <div class="w20 smc ps-1">
    <div class="sr d-flex align-items-center"><svg width="16" height="16" viewBox="0 0 16 16"><circle cx="8" cy="8" r="7.500" fill="#e84"/><path d="M8 8V.5A7.500 7.500 0 0 1 15.500 8Z" fill="#fc4"/><path d="M8 8H15.500A7.500 7.500 0 0 1 8 15.500Z" fill="#7a4fc0"/><path d="M8 8V15.500A7.500 7.500 0 0 1 .5 8Z" fill="#e04060"/><path d="M8 8H.5A7.500 7.500 0 0 1 8 .5Z" fill="#5bb84a"/></svg></div>
    <div class="sr d-flex align-items-center"><svg width="16" height="16" viewBox="0 0 16 16"><path d="M0 2.500H16M0 7.500H16M0 13H16" stroke="#ddd" stroke-width="3.500"/></svg></div>
    <div class="sr d-flex align-items-center"><svg width="16" height="16" viewBox="0 0 16 16"><path d="M0 2H16M0 6H16M0 10H16M0 14H16" stroke="#ddd" stroke-dasharray="2 1"/></svg></div>
   </div>
   <div class="flex-grow-1 pe-1">
    <div class="drp d-flex align-items-center"><span class="sw0 ms-1"></span><span class="ms-3">VonLayer</span><span class="crt"></span></div>
    <div class="drp d-flex align-items-center"><span class="ln2"></span>VONLAY<span class="crt"></span></div>
    <div class="drp d-flex align-items-center"><span class="ln2"></span>VonLa...<span class="crt"></span></div>
   </div>
  </div>
 </div><div class="pf d-flex justify-content-center align-items-center">Eigenschaften <span class="crt"></span><svg class="corn" width="8" height="8" viewBox="0 0 8 8"><path d="M1 1 6 6M7 3V7H3" stroke="#ddd" fill="none"/></svg></div></div>
 <div class="pnl p74"><div class="pb d-flex">
  <div class="big w46 d-flex flex-column align-items-center"><div class="bic"><svg width="36" height="36" viewBox="0 0 36 36"><rect x="3" y="3" width="18" height="30" fill="none" stroke="#ddd" stroke-dasharray="1.500 1.500"/><rect x="6" y="6" width="12" height="11" fill="#ead88a"/><circle cx="12" cy="25" r="6" fill="url(#gd)"/><path d="M20 14 33 2M22 1 24 12 35 14 24 16 21 28 20 17 9 14 20 11Z" stroke="#aef" fill="#cff"/></svg></div><span>Gruppe</span></div>
  <div class="smc w26 ptl1 ms-1">
   <div class="sr d-flex align-items-center"><svg width="18" height="16" viewBox="0 0 18 16"><rect x="2" y="1" width="7" height="8" fill="#ead88a"/><circle cx="5" cy="12" r="3" fill="#ddd"/><path d="M8 11 16 2" stroke="#ddd" stroke-width="2"/></svg></div>
   <div class="sr d-flex align-items-center"><svg width="18" height="16" viewBox="0 0 18 16"><rect x="2" y="1" width="8" height="14" fill="none" stroke="#ddd" stroke-dasharray="1 1"/><rect x="4" y="3" width="4" height="4" fill="#ead88a"/><circle cx="6" cy="11" r="2" fill="#6f9ad8"/><path d="M12 6H17M14.500 3.500V8.500M12 11H17" stroke="#ddd"/></svg></div>
   <div class="actbtn d-flex align-items-center justify-content-center"><svg width="18" height="20" viewBox="0 0 18 20"><rect x="3" y="3" width="5" height="5" fill="#ead88a"/><circle cx="5.500" cy="13" r="3" fill="#ddd"/><path d="M10 7V18L13 15 17 15Z" fill="#ffe27a" stroke="#222" stroke-width=".5"/></svg></div>
  </div>
 </div><div class="pf d-flex justify-content-center align-items-center">Gruppen <span class="crt"></span></div></div>
 <div class="pnl p120"><div class="pb d-flex">
  <div class="big w92 d-flex flex-column align-items-center"><div class="bic"><svg width="34" height="36" viewBox="0 0 34 36"><path d="M1 12V24M33 12V24" stroke="#eee"/><path d="M1 18H33" stroke="#eee"/><rect x="1" y="25" width="32" height="7" fill="#e6b32a" stroke="#7a5a10"/></svg></div><span>Messen</span><span class="crt"></span></div>
  <div class="smc w26 ml8n">
   <div class="sr d-flex align-items-center"><svg width="18" height="18" viewBox="0 0 18 18"><rect x="1" y="2" width="8" height="13" fill="#3a8a3a" stroke="#222"/><path d="M9 8V17L11 14 14 14Z" fill="#fff" stroke="#222" stroke-width=".5"/><path d="M15 0 12 5H15L13 8 17 4H15Z" fill="#f5a020"/></svg></div>
   <div class="sr d-flex align-items-center"><svg width="16" height="16" viewBox="0 0 16 16"><path d="M8 0V16M0 8H16" stroke="#ddd"/><circle cx="8" cy="8" r="3" fill="none" stroke="#ddd"/></svg></div>
   <div class="sr d-flex align-items-center"><svg width="14" height="16" viewBox="0 0 14 16"><rect x="1" y="1" width="12" height="14" fill="#ddd" stroke="#333"/><rect x="3" y="3" width="8" height="3" fill="#555"/><path d="M3 9H11M3 12H11" stroke="#444" stroke-dasharray="2 1"/></svg></div>
  </div>
 </div><div class="pf d-flex justify-content-center align-items-center">Dienstprogramme <span class="crt"></span></div></div>
 <div class="pnl p96"><div class="pb d-flex">
  <div class="big w66 ps-2 d-flex flex-column align-items-center"><div class="bic"><svg width="28" height="36" viewBox="0 0 28 36"><rect x="2" y="4" width="20" height="27" fill="#b5a68e" stroke="#333"/><rect x="7" y="1" width="10" height="6" fill="#ddd" stroke="#333"/><path d="M10 11H20L26 17V33H10Z" fill="#eef" stroke="#333"/></svg></div><span>Einfügen</span><span class="crt"></span></div>
  <div class="smc w26 ps-2">
   <div class="sr d-flex align-items-center"><svg width="16" height="16" viewBox="0 0 16 16"><path d="M2 1 12 13M14 1 4 13" stroke="#ddd" stroke-width="1.500"/><circle cx="4" cy="13" r="2" fill="none" stroke="#ddd"/><circle cx="12" cy="13" r="2" fill="none" stroke="#ddd"/></svg></div>
   <div class="sr d-flex align-items-center"><svg width="16" height="16" viewBox="0 0 16 16"><path d="M1 1H8V12H1Z" fill="#ccc" stroke="#333"/><path d="M5 4H11L15 8V15H5Z" fill="#eee" stroke="#333"/></svg></div>
  </div>
 </div><div class="pf d-flex justify-content-center align-items-center">Zwischenablage</div></div>
 <div class="pnl p75"><div class="pb d-flex justify-content-center">
  <div class="big d-flex flex-column align-items-center ps-2"><div class="bic"><svg width="28" height="36" viewBox="0 0 28 36"><path d="M2 10H13V17H26V30H2Z" fill="url(#gd)" stroke="#333"/></svg></div><span>Basis</span><span class="crt"></span></div>
 </div><div class="pf d-flex justify-content-center align-items-center">Ansicht <span class="crt"></span><svg class="corn" width="8" height="8" viewBox="0 0 8 8"><path d="M1 1 6 6M7 3V7H3" stroke="#ddd" fill="none"/></svg></div></div>
</div>
<div class="dtabs d-flex">
 <div class="dt dt1">Neue Registerkarte</div>
 <div class="dt dt2 d-flex justify-content-between"><span>5347ver_(Vers2000)*</span><span class="cls">×</span></div>
 <div class="dt3">+</div>
</div>
<div class="gstrip"></div>
<div class="work d-flex">
 <div class="lp d-flex flex-column">
  <div class="lpt">LAYEREIGENSCHAFTEN-MANAGER</div>
  <div class="lph d-flex"><span class="akt">Aktueller Layer: Trummen</span>
   <div class="lps">Suche nach Layer<svg width="12" height="12" viewBox="0 0 12 12"><circle cx="5" cy="5" r="3.500" fill="#ddd"/><path d="M7 7 11 11" stroke="#eee" stroke-width="2"/></svg></div></div>
  <div class="lpb d-flex align-items-center">
   <span><svg width="14" height="12" viewBox="0 0 14 12"><path d="M1 2H6L7 3H13V11H1Z" fill="#aaa"/><path d="M4 5H10L7 8Z" fill="#555"/></svg></span>
   <span><svg width="14" height="12" viewBox="0 0 14 12"><path d="M1 2H6L7 3H13V11H1Z" fill="#aaa"/></svg></span>
   <span class="lsep"></span>
   <span><svg width="18" height="14" viewBox="0 0 18 14"><polygon points="5,1 15,1 11,5 1,5" fill="#ddd"/><rect x="9" y="4" width="8" height="10" fill="#eee"/><rect x="11" y="6" width="3" height="3" fill="#2a5a9a"/></svg></span>
   <span><svg width="20" height="14" viewBox="0 0 20 14"><g fill="none" stroke="#aaa"><polygon points="5,4 14,4 10,7 1,7"/><polygon points="5,8 14,8 10,11 1,11"/></g><circle cx="14" cy="4" r="3" fill="#f80"/></svg></span>
   <span><svg width="20" height="14" viewBox="0 0 20 14"><g fill="none" stroke="#aaa"><polygon points="5,4 14,4 10,7 1,7"/><polygon points="5,8 14,8 10,11 1,11"/></g><path d="M13 4V12M9 8H17M10 5 16 11M16 5 10 11" stroke="#7cc"/></svg></span>
   <span><svg width="20" height="14" viewBox="0 0 20 14"><g fill="none" stroke="#aaa"><polygon points="5,4 14,4 10,7 1,7"/><polygon points="5,8 14,8 10,11 1,11"/></g><path d="M10 5 16 11M16 5 10 11" stroke="#f22" stroke-width="2"/></svg></span>
   <span><svg width="20" height="14" viewBox="0 0 20 14"><g fill="none" stroke="#999"><polygon points="7,2 16,2 12,5 3,5"/><polygon points="5,6 14,6 10,9 1,9"/></g><path d="M19 1V5L15 3Z" fill="#6a6"/></svg></span>
   <span class="ms-auto"><svg width="13" height="13" viewBox="0 0 13 13"><path d="M2 6A4.500 4.500 0 0 1 10 3.500M11 7A4.500 4.500 0 0 1 3 9.500" fill="none" stroke="#bbb" stroke-width="2"/><path d="M11 1V5H7ZM2 12V8H6Z" fill="#bbb"/></svg></span>
   <span><svg width="15" height="15" viewBox="0 0 15 15"><circle cx="7.500" cy="7.500" r="3.800" fill="none" stroke="#bbb" stroke-width="2.500"/><path d="M7.500 0V15M0 7.500H15M2.200 2.200 12.800 12.800M12.800 2.200 2.200 12.800" stroke="#bbb" stroke-width="2" stroke-dasharray="2.500 10"/></svg></span>
  </div>
  <div class="d-flex">
   <div class="gut d-flex flex-column justify-content-between"><div class="g1">»</div><div class="g1 pb-2">»</div></div>
   <div>
    <div class="d-flex">
     <div class="lwin"><table class="table table-sm lyr">
      <colgroup><col class="c1"><col class="c2"><col class="c3"><col class="c4"><col class="c5"><col class="c6"><col class="c7"><col class="c8"><col class="c9"></colgroup>
      <thead><tr><th>S...</th><th>Name<i class="sortm"></i></th><th class="cdv">Ein</th><th>Frie...</th><th>S...</th><th>Farbe</th><th>Linientyp</th><th>Linienstä...</th><th>Trans...</th></tr></thead>
      <tbody>
<tr><td><svg width="16" height="10"><use href="#ly"/></svg></td><td class="nm">BB-BW-LI...</td><td class="cdv"><svg width="10" height="14"><use href="#bb"/></svg></td><td><svg width="16" height="16"><use href="#sn"/></svg></td><td><svg width="16" height="14"><use href="#lk"/></svg></td><td class="cl"><i class="sw sy"></i>gelb</td><td class="lt">AUSGEZ...</td><td class="lw"><i class="ln"></i>Vorg...</td><td class="tr0">0</td></tr>
<tr><td><svg width="16" height="10"><use href="#ly"/></svg></td><td class="nm">BB-BW-LI...</td><td class="cdv"><svg width="10" height="14"><use href="#bb"/></svg></td><td><svg width="16" height="16"><use href="#sn"/></svg></td><td><svg width="16" height="14"><use href="#lk"/></svg></td><td class="cl"><i class="sw sr0"></i>10</td><td class="lt">LT018</td><td class="lw"><i class="ln"></i>Vorg...</td><td class="tr0">0</td></tr>
<tr><td><svg width="16" height="10"><use href="#ly"/></svg></td><td class="nm">BB-BW-LI...</td><td class="cdv"><svg width="10" height="14"><use href="#bb"/></svg></td><td><svg width="16" height="16"><use href="#sn"/></svg></td><td><svg width="16" height="14"><use href="#lk"/></svg></td><td class="cl"><i class="sw sm"></i>ma...</td><td class="lt">AUSGEZ...</td><td class="lw"><i class="ln"></i>Vorg...</td><td class="tr0">0</td></tr>
<tr><td><svg width="16" height="10"><use href="#ly"/></svg></td><td class="nm">BB-BW-LI...</td><td class="cdv"><svg width="10" height="14"><use href="#bb"/></svg></td><td><svg width="16" height="16"><use href="#sn"/></svg></td><td><svg width="16" height="14"><use href="#lk"/></svg></td><td class="cl"><i class="sw sr0"></i>10</td><td class="lt">AUSGEZ...</td><td class="lw"><i class="ln"></i>Vorg...</td><td class="tr0">0</td></tr>
<tr><td><svg width="16" height="10"><use href="#ly"/></svg></td><td class="nm">BB-BW-LI...</td><td class="cdv"><svg width="10" height="14"><use href="#bb"/></svg></td><td><svg width="16" height="16"><use href="#sn"/></svg></td><td><svg width="16" height="14"><use href="#lk"/></svg></td><td class="cl"><i class="sw s162"></i>162</td><td class="lt">CONTIN...</td><td class="lw"><i class="ln"></i>0.25...</td><td class="tr0">0</td></tr>
<tr><td><svg width="16" height="10"><use href="#ly"/></svg></td><td class="nm">BB-BW-LI...</td><td class="cdv"><svg width="10" height="14"><use href="#bb"/></svg></td><td><svg width="16" height="16"><use href="#sn"/></svg></td><td><svg width="16" height="14"><use href="#lk"/></svg></td><td class="cl"><i class="sw sr0"></i>10</td><td class="lt">AUSGEZ...</td><td class="lw"><i class="ln"></i>Vorg...</td><td class="tr0">0</td></tr>
<tr><td><svg width="16" height="10"><use href="#ly"/></svg></td><td class="nm">BB-BW-TXT</td><td class="cdv"><svg width="10" height="14"><use href="#bb"/></svg></td><td><svg width="16" height="16"><use href="#sn"/></svg></td><td><svg width="16" height="14"><use href="#lk"/></svg></td><td class="cl"><i class="sw sy"></i>gelb</td><td class="lt">AUSGEZ...</td><td class="lw"><i class="ln"></i>Vorg...</td><td class="tr0">0</td></tr>
<tr><td><svg width="16" height="10"><use href="#lyw"/></svg></td><td class="nm">Befestigun...</td><td class="cdv"><svg width="10" height="14"><use href="#by"/></svg></td><td><svg width="16" height="16"><use href="#sn"/></svg></td><td><svg width="16" height="14"><use href="#lk"/></svg></td><td class="cl"><i class="sw sw1"></i>weiß</td><td class="lt">AUSGEZ...</td><td class="lw"><i class="ln"></i>Vorg...</td><td class="tr0">0</td></tr>
<tr><td><svg width="16" height="10"><use href="#lyw"/></svg></td><td class="nm">Beleuchtung</td><td class="cdv"><svg width="10" height="14"><use href="#by"/></svg></td><td><svg width="16" height="16"><use href="#sn"/></svg></td><td><svg width="16" height="14"><use href="#lk"/></svg></td><td class="cl"><i class="sw s30"></i>30</td><td class="lt">AUSGEZ...</td><td class="lw"><i class="ln"></i>Vorg...</td><td class="tr0">0</td></tr>
<tr><td><svg width="16" height="10"><use href="#ly"/></svg></td><td class="nm">BG-GR-SYM</td><td class="cdv"><svg width="10" height="14"><use href="#bb"/></svg></td><td><svg width="16" height="16"><use href="#sn"/></svg></td><td><svg width="16" height="14"><use href="#lk"/></svg></td><td class="cl"><i class="sw sy"></i>gelb</td><td class="lt">AUSGEZ...</td><td class="lw"><i class="ln"></i>Vorg...</td><td class="tr0">0</td></tr>
<tr><td><svg width="16" height="10"><use href="#ly"/></svg></td><td class="nm">BG-GR-SY...</td><td class="cdv"><svg width="10" height="14"><use href="#bb"/></svg></td><td><svg width="16" height="16"><use href="#sn"/></svg></td><td><svg width="16" height="14"><use href="#lk"/></svg></td><td class="cl"><i class="sw sw1"></i>weiß</td><td class="lt">CONTIN...</td><td class="lw"><i class="ln"></i>0.25...</td><td class="tr0">0</td></tr>
<tr><td><svg width="16" height="10"><use href="#ly"/></svg></td><td class="nm">BL-BL-LIN</td><td class="cdv"><svg width="10" height="14"><use href="#bb"/></svg></td><td><svg width="16" height="16"><use href="#sn"/></svg></td><td><svg width="16" height="14"><use href="#lk"/></svg></td><td class="cl"><i class="sw s30"></i>30</td><td class="lt">AUSGEZ...</td><td class="lw"><i class="ln"></i>Vorg...</td><td class="tr0">0</td></tr>
<tr><td><svg width="16" height="10"><use href="#ly"/></svg></td><td class="nm">BL-GS-LIN</td><td class="cdv"><svg width="10" height="14"><use href="#bb"/></svg></td><td><svg width="16" height="16"><use href="#sn"/></svg></td><td><svg width="16" height="14"><use href="#lk"/></svg></td><td class="cl"><i class="sw s40"></i>40</td><td class="lt">AUSGEZ...</td><td class="lw"><i class="ln"></i>Vorg...</td><td class="tr0">0</td></tr>
<tr><td><svg width="16" height="10"><use href="#ly"/></svg></td><td class="nm">BL-LE-LIN</td><td class="cdv"><svg width="10" height="14"><use href="#bb"/></svg></td><td><svg width="16" height="16"><use href="#sn"/></svg></td><td><svg width="16" height="14"><use href="#lk"/></svg></td><td class="cl"><i class="sw s242"></i>242</td><td class="lt">AUSGEZ...</td><td class="lw"><i class="ln"></i>Vorg...</td><td class="tr0">0</td></tr>
<tr><td><svg width="16" height="10"><use href="#ly"/></svg></td><td class="nm">BL-MK-LIN</td><td class="cdv"><svg width="10" height="14"><use href="#bb"/></svg></td><td><svg width="16" height="16"><use href="#sn"/></svg></td><td><svg width="16" height="14"><use href="#lk"/></svg></td><td class="cl"><i class="sw s90"></i>90</td><td class="lt">AUSGEZ...</td><td class="lw"><i class="ln"></i>Vorg...</td><td class="tr0">0</td></tr>
<tr><td><svg width="16" height="10"><use href="#ly"/></svg></td><td class="nm">BL-MP-LIN</td><td class="cdv"><svg width="10" height="14"><use href="#bb"/></svg></td><td><svg width="16" height="16"><use href="#sn"/></svg></td><td><svg width="16" height="14"><use href="#lk"/></svg></td><td class="cl"><i class="sw s173"></i>173</td><td class="lt">CONTIN...</td><td class="lw"><i class="ln"></i>Vorg...</td><td class="tr0">0</td></tr>
<tr><td><svg width="16" height="10"><use href="#ly"/></svg></td><td class="nm">BL-MS-LIN</td><td class="cdv"><svg width="10" height="14"><use href="#bb"/></svg></td><td><svg width="16" height="16"><use href="#sn"/></svg></td><td><svg width="16" height="14"><use href="#lk"/></svg></td><td class="cl"><i class="sw s210"></i>210</td><td class="lt">CONTIN...</td><td class="lw"><i class="ln"></i>Vorg...</td><td class="tr0">0</td></tr>
<tr><td><svg width="16" height="10"><use href="#ly"/></svg></td><td class="nm">BL-NS-LIN</td><td class="cdv"><svg width="10" height="14"><use href="#bb"/></svg></td><td><svg width="16" height="16"><use href="#sn"/></svg></td><td><svg width="16" height="14"><use href="#lk"/></svg></td><td class="cl"><i class="sw s200"></i>200</td><td class="lt">AUSGEZ...</td><td class="lw"><i class="ln"></i>Vorg...</td><td class="tr0">0</td></tr>
<tr><td><svg width="16" height="10"><use href="#ly"/></svg></td><td class="nm">BL-RE-LIN</td><td class="cdv"><svg width="10" height="14"><use href="#bb"/></svg></td><td><svg width="16" height="16"><use href="#sn"/></svg></td><td><svg width="16" height="14"><use href="#lk"/></svg></td><td class="cl"><i class="sw s13"></i>13</td><td class="lt">LT005</td><td class="lw"><i class="ln"></i>Vorg...</td><td class="tr0">0</td></tr>
<tr><td><svg width="16" height="10"><use href="#ly"/></svg></td><td class="nm">BL-SR-LIN</td><td class="cdv"><svg width="10" height="14"><use href="#bb"/></svg></td><td><svg width="16" height="16"><use href="#sn"/></svg></td><td><svg width="16" height="14"><use href="#lk"/></svg></td><td class="cl"><i class="sw s131"></i>131</td><td class="lt">AUSGEZ...</td><td class="lw"><i class="ln"></i>Vorg...</td><td class="tr0">0</td></tr>
<tr><td><svg width="16" height="10"><use href="#ly"/></svg></td><td class="nm">BL-SW-LIN</td><td class="cdv"><svg width="10" height="14"><use href="#bb"/></svg></td><td><svg width="16" height="16"><use href="#sn"/></svg></td><td><svg width="16" height="14"><use href="#lk"/></svg></td><td class="cl"><i class="sw s14"></i>14</td><td class="lt">AUSGEZ...</td><td class="lw"><i class="ln"></i>Vorg...</td><td class="tr0">0</td></tr>
<tr><td><svg width="16" height="10"><use href="#ly"/></svg></td><td class="nm">BL-WS-LIN</td><td class="cdv"><svg width="10" height="14"><use href="#bb"/></svg></td><td><svg width="16" height="16"><use href="#sn"/></svg></td><td><svg width="16" height="14"><use href="#lk"/></svg></td><td class="cl"><i class="sw s160"></i>160</td><td class="lt">AUSGEZ...</td><td class="lw"><i class="ln"></i>Vorg...</td><td class="tr0">0</td></tr>
<tr class="sel"><td><svg width="16" height="10"><use href="#ly"/></svg></td><td class="nm">BT-BM-SYM</td><td class="cdv"><svg width="10" height="14"><use href="#by"/></svg></td><td><svg width="16" height="16"><use href="#sn"/></svg></td><td><svg width="16" height="14"><use href="#lk"/></svg></td><td class="cl"><i class="sw sy"></i>gelb</td><td class="lt">AUSGEZ...</td><td class="lw"><i class="ln"></i>Vorg...</td><td class="tr0">0</td></tr>
<tr><td><svg width="16" height="10"><use href="#ly"/></svg></td><td class="nm">BT-BM-TXT</td><td class="cdv"><svg width="10" height="14"><use href="#by"/></svg></td><td><svg width="16" height="16"><use href="#sn"/></svg></td><td><svg width="16" height="14"><use href="#lk"/></svg></td><td class="cl"><i class="sw sy"></i>gelb</td><td class="lt">AUSGEZ...</td><td class="lw"><i class="ln"></i>Vorg...</td><td class="tr0">0</td></tr>
<tr><td><svg width="16" height="10"><use href="#ly"/></svg></td><td class="nm">BT-BM-TX...</td><td class="cdv"><svg width="10" height="14"><use href="#by"/></svg></td><td><svg width="16" height="16"><use href="#sn"/></svg></td><td><svg width="16" height="14"><use href="#lk"/></svg></td><td class="cl"><i class="sw sy"></i>gelb</td><td class="lt">AUSGEZ...</td><td class="lw"><i class="ln"></i>Vorg...</td><td class="tr0">0</td></tr>
<tr><td><svg width="16" height="10"><use href="#ly"/></svg></td><td class="nm">BT-BO-LIN</td><td class="cdv"><svg width="10" height="14"><use href="#bb"/></svg></td><td><svg width="16" height="16"><use href="#sn"/></svg></td><td><svg width="16" height="14"><use href="#lk"/></svg></td><td class="cl"><i class="sw sr0"></i>rot</td><td class="lt">CONTIN...</td><td class="lw"><i class="ln"></i>Vorg...</td><td class="tr0">0</td></tr>
<tr><td><svg width="16" height="10"><use href="#ly"/></svg></td><td class="nm">BT-BO-LIN...</td><td class="cdv"><svg width="10" height="14"><use href="#bb"/></svg></td><td><svg width="16" height="16"><use href="#sn"/></svg></td><td><svg width="16" height="14"><use href="#lk"/></svg></td><td class="cl"><i class="sw sg"></i>grün</td><td class="lt">LT005</td><td class="lw"><i class="ln"></i>Vorg...</td><td class="tr0">0</td></tr>
      </tbody></table></div>
     <div class="vsb"><svg class="arw" width="9" height="6" viewBox="0 0 9 6"><path d="M1 5 4.500 1 8 5" fill="none" stroke="#333" stroke-width="1.500"/></svg><div class="vth"></div><svg class="arw2" width="9" height="6" viewBox="0 0 9 6"><path d="M1 1 4.500 5 8 1" fill="none" stroke="#333" stroke-width="1.500"/></svg></div>
    </div>
    <div class="hsb"><svg class="arh1" width="6" height="9" viewBox="0 0 6 9"><path d="M5 1 1 4.500 5 8" fill="none" stroke="#333" stroke-width="1.500"/></svg><div class="hth"></div><svg class="arh2" width="6" height="9" viewBox="0 0 6 9"><path d="M1 1 5 4.500 1 8" fill="none" stroke="#333" stroke-width="1.500"/></svg></div>
   </div>
  </div>
  <div class="lpst d-flex align-items-center"><div class="fbtn d-flex align-items-center"><svg width="16" height="15" viewBox="0 0 16 15"><polygon points="4,2 15,1 12,13 1,14" fill="#6f9ad8"/><path d="M10 2 6 8H9L6 13 12 6H9Z" fill="#f2d030"/></svg><span class="crt"></span></div><span>ALLE: 90 Layer angezeigt von 90 Gesamtlayern</span></div>
 </div>
 <div class="cnv">
  <svg width="1127" height="636" viewBox="473 194 1127 636" class="d-block">
   <text x="476" y="211" fill="#e4e4e4" font-size="12">[−][Oben][2D-Drahtkörper]</text>
   <g class="text-white">
    <use href="#tr" transform="translate(516.700 427) scale(.08)"/><use href="#tr" transform="translate(481 445) scale(.08)"/><use href="#tr" transform="translate(498.700 455.700) scale(.055)"/><use href="#tr" transform="translate(510 462.700) scale(.04)"/><use href="#tr" transform="translate(547 445) scale(.11)"/><use href="#tr" transform="translate(527 474) scale(.13)"/><use href="#tr" transform="translate(544 483.700) scale(.08)"/><use href="#tr" transform="translate(587 468) scale(.08)"/><use href="#tr" transform="translate(570 499) scale(.08)"/><use href="#tr" transform="translate(591 511) scale(.12)"/><use href="#tr" transform="translate(610 521) scale(.13)"/><use href="#tr" transform="translate(622 526.700) scale(.04)"/><use href="#tr" transform="translate(634 494) scale(.08)"/><use href="#tr" transform="translate(660 508) scale(.13)"/><use href="#tr" transform="translate(735 547) scale(.095)"/><use href="#tr" transform="translate(683 555) scale(.055)"/><use href="#tr" transform="translate(758 594) scale(.12)"/><use href="#tr" transform="translate(836 599) scale(.16)"/><use href="#tr" transform="translate(908 669) scale(.185)"/><use href="#tr" transform="translate(946 701) scale(.11)"/><use href="#tr" transform="translate(954 712.700) scale(.13)"/><use href="#tr" transform="translate(979 731) scale(.08)"/><use href="#tr" transform="translate(1054 745) scale(.105)"/><use href="#tr" transform="translate(1119 783.700) scale(.107)"/><use href="#tr" transform="translate(1159 765.700) scale(.08)"/><use href="#tr" transform="translate(1175 774) scale(.08)"/><use href="#tr" transform="translate(1185 780.700) scale(.04)"/><use href="#tr" transform="translate(1205 804.700) scale(.08)"/><use href="#tr" transform="translate(1236.700 824) scale(.08)"/><use href="#tr" transform="translate(1205 831) scale(.08)"/>
    <path stroke="currentColor" stroke-width="2.500" stroke-dasharray="3 .6" d="M525 424H536M473 453H478M484 461H495M496 466H507M558 442H569M504 482H515M527 490H538M584 458H595M553 508H564M603 505H614M624 518H635M619 533H630M643 491H654M673 505H686M744 544H755M675 564H686M773 592H783M846 583H856M886 646H900M925 711H938M947 716H960M964 742H977M1034 735H1047M1098 795H1111M1152 756H1166M1172 764H1186M1186 775H1200M1190 815H1203M1202 822H1215"/>
   </g>
   <g class="ylw">
    <use href="#tr" transform="translate(840.700 217.300) scale(.19)"/><use href="#tr" transform="translate(877 222) scale(.185)"/><use href="#tr" transform="translate(888 244) scale(.18)"/><use href="#tr" transform="translate(859 252.700) scale(.15)"/><use href="#tr" transform="translate(888 259) scale(.095)"/><use href="#tr" transform="translate(867 270.700) scale(.15)"/><use href="#tr" transform="translate(866 200) scale(.17)"/><use href="#tr" transform="translate(885.700 310) scale(.185)"/><use href="#tr" transform="translate(923 322.700) scale(.185)"/><use href="#tr" transform="translate(899.700 340.700) scale(.187)"/><use href="#tr" transform="translate(933 344) scale(.185)"/><use href="#tr" transform="translate(942 365) scale(.185)"/><use href="#tr" transform="translate(950 381.700) scale(.167)"/><use href="#tr" transform="translate(940.700 441) scale(.16)"/><use href="#tr" transform="translate(973 440) scale(.185)"/><use href="#tr" transform="translate(949 466) scale(.16)"/><use href="#tr" transform="translate(981 464) scale(.185)"/><use href="#tr" transform="translate(956 488) scale(.185)"/><use href="#tr" transform="translate(951.700 515) scale(.13)"/><use href="#tr" transform="translate(994 507) scale(.187)"/><use href="#tr" transform="translate(999 532) scale(.185)"/><use href="#tr" transform="translate(1019 554) scale(.257)"/><use href="#tr" transform="translate(998.700 610) scale(.067)"/><use href="#tr" transform="translate(1230.700 450.700) scale(.095)"/><use href="#tr" transform="translate(1271.700 440) scale(.043)"/><use href="#tr" transform="translate(1333 429) scale(.057)"/><use href="#tr" transform="translate(1352 425) scale(.057)"/><use href="#tr" transform="translate(1374 420.700) scale(.07)"/><use href="#tr" transform="translate(1435 409) scale(.08)"/><use href="#tr" transform="translate(1456 404.700) scale(.08)"/><use href="#tr" transform="translate(1480 400.700) scale(.08)"/><use href="#tr" transform="translate(1534.700 389.700) scale(.03)"/><use href="#tr" transform="translate(1554 385.700) scale(.08)"/><use href="#tr" transform="translate(1578.700 381) scale(.08)"/>
    <path stroke="currentColor" stroke-width="2.500" stroke-dasharray="3 .6" d="M885 200H899M894 212H908M897 224H911M821 226H834M835 250H849M899 259H911M844 271H858M861 316H875M937 321H951M875 342H889M949 343H963M960 363H973M964 380H978M988 427H1002M915 453H929M920 463H934M1000 465H1012M924 482H938M928 512H938M1007 502H1021M1010 527H1024M1039 550H1053M1006 610H1019M1241 450H1254M1277 439H1289M1299 435H1315M1338 428H1349M1358 423H1368M1381 420H1394M1443 407H1453M1465 404H1475M1489 400H1502M1537 389H1548M1562 382H1573M1585 376H1600"/>
   </g>
   <path d="M1118 278H1154.500M1161.500 278H1199M1158 238V274.500M1158 281.500V319" stroke="#fff" fill="none"/><rect x="1154.500" y="274.500" width="7" height="7" fill="none" stroke="#fff"/>
   <circle cx="1525" cy="268" r="48.500" fill="none" stroke="#444a53" stroke-width="11"/>
   <rect x="1502" y="245" width="46" height="46" fill="#ababab"/><rect x="1511" y="254" width="28" height="28" fill="#9da0a4"/>
   <text x="1525" y="272" font-size="12" font-weight="700" text-anchor="middle" fill="#4a4f57" textLength="27" lengthAdjust="spacingAndGlyphs">OBEN</text>
   <g font-size="20" font-weight="700" fill="#a4a5a9" text-anchor="middle"><text x="1525" y="224">N</text><text x="1474" y="275">W</text><text x="1576" y="275">O</text><text x="1525" y="327">S</text></g>
   <rect x="1501.500" y="347.500" width="46" height="17" rx="3" fill="#8f93a0" stroke="#777b88"/>
   <text x="1505" y="360" font-size="11" fill="#565a66">WKS</text><path d="M1535 353H1543L1539 358Z" fill="none" stroke="#676b78"/>
  </svg>
 </div>
</div>
<div class="lrow d-flex">
 <div class="ltab lt1">Modell</div><div class="ltab lt2">Layout1</div><div class="ltab lt3">+</div>
 <div class="sbar d-flex ms-auto">
  <div class="sg1 w241">3553561.8166, 5947955.6050, 0.0000</div>
  <div class="sg1 w55">MODELL</div>
  <div class="sg1 w63"><svg width="14" height="14" viewBox="0 0 14 14"><path d="M1 0V14M4 0V14M7 0V14M10 0V14M13 0V14M0 1H14M0 4H14M0 7H14M0 10H14M0 13H14" stroke="#ccc" stroke-width=".8"/></svg><svg width="14" height="14" viewBox="0 0 14 14"><path d="M1 0V14M4 0V14M7 0V14M10 0V14M13 0V14" stroke="#bbb" stroke-dasharray="1 2"/></svg><span class="crt"></span></div>
  <div class="sg1 w104"><svg width="14" height="14" viewBox="0 0 14 14"><path d="M2 0V12H14M2 7H7V12" stroke="#bbb" fill="none"/></svg><svg width="16" height="16" viewBox="0 0 16 16"><circle cx="8" cy="8" r="6" fill="none" stroke="#bbb" stroke-width="1.500"/><path d="M8 8H15M8 8 12 2" stroke="#bbb"/></svg><span class="crt"></span><svg width="14" height="18" viewBox="0 0 14 18"><path d="M2 0 12 18M8 0 6 18" stroke="#aaa" stroke-width="1.200"/></svg><span class="crt"></span></div>
  <div class="sg1 w64"><svg width="16" height="16" viewBox="0 0 16 16"><path d="M1 15H15M1 15 12 2" stroke="#2f8ef0" stroke-width="1.700"/></svg><svg width="14" height="16" viewBox="0 0 14 16"><rect x="1" y="3" width="12" height="12" fill="none" stroke="#2f8ef0" stroke-width="1.500"/><rect x="0" y="0" width="5" height="5" fill="#0a0"/></svg><span class="crt"></span></div>
  <div class="sg1 w106"><svg width="16" height="18" viewBox="0 0 16 18"><path d="M8 3 2 17M8 3 14 17M4 12H12" stroke="#2f8ef0" stroke-width="2.200"/><circle cx="9" cy="3" r="2.500" fill="#2f8ef0"/></svg><svg width="16" height="18" viewBox="0 0 16 18"><path d="M8 3 2 17M8 3 14 17M4 12H12" stroke="#bbb" stroke-width="2.200"/><path d="M13 1 10 7" stroke="#f0f0f0"/></svg><svg width="14" height="18" viewBox="0 0 14 18"><path d="M7 2 1 17H13Z" fill="#bbb"/></svg><span>1:1</span><span class="crt"></span></div>
  <div class="sg1 w40"><svg width="14" height="14" viewBox="0 0 14 14"><circle cx="7" cy="7" r="3.500" fill="none" stroke="#bbb" stroke-width="2.500"/><path d="M7 0V14M0 7H14M2 2 12 12M12 2 2 12" stroke="#bbb" stroke-width="2" stroke-dasharray="2 10"/></svg><span class="crt"></span></div>
  <div class="sg1 w25"><svg width="16" height="16" viewBox="0 0 16 16"><path d="M8 0V16M0 8H16" stroke="#ccc" stroke-width="2"/></svg></div>
  <div class="sg1 w27"><svg width="18" height="18" viewBox="0 0 18 18"><circle cx="9" cy="9" r="8" fill="#23415f" stroke="#2f8ef0" stroke-width="1.500"/><path d="M5 13 13 5" stroke="#4fa8f8"/></svg></div>
  <div class="sg1 w51"><svg width="16" height="18" viewBox="0 0 16 18"><rect x="2" y="1" width="8" height="12" fill="#eee"/><path d="M3 5H9" stroke="#25a"/><path d="M6 9H14V15H6Z" fill="#f2cc30"/><path d="M9 14 11 17 15 11" stroke="#1c1" stroke-width="1.500" fill="none"/></svg><svg width="16" height="18" viewBox="0 0 16 18"><rect x="1" y="1" width="6" height="6" fill="none" stroke="#bbb"/><circle cx="12" cy="6" r="3" fill="none" stroke="#bbb"/><path d="M6 9 10 17H2Z" fill="none" stroke="#bbb"/></svg></div>
  <div class="sg1 w49"><svg width="15" height="15" viewBox="0 0 15 15"><rect x=".5" y=".5" width="14" height="14" fill="none" stroke="#ccc"/><path d="M3 12 12 3M8 3H12V7M3 8V12H7" stroke="#ccc" fill="none"/></svg><svg width="15" height="13" viewBox="0 0 15 13"><path d="M0 1.500H15M0 6.500H15M0 11.500H15" stroke="#ccc" stroke-width="2"/></svg></div>
 </div>
</div>
<div class="tbar d-flex">
 <div class="tslot d-flex align-items-center justify-content-center"><svg width="16" height="16" viewBox="0 0 16 16"><path d="M0 2.300 6.800 1.300V7.500H0ZM7.700 1.200 16 0V7.500H7.700ZM0 8.500H6.800V14.700L0 13.700ZM7.700 8.500H16V16L7.700 14.800Z" fill="#fff"/></svg></div>
 <div class="tslot d-flex align-items-center justify-content-center"><svg width="20" height="14" viewBox="0 0 20 14"><path d="M4.500 1.500H15.500V12.500H4.500ZM.5 3.500H2.500V10.500H.5M19.500 3.500H17.500V10.500H19.500" fill="none" stroke="#fff"/></svg></div>
 <div class="tapp tmg d-flex align-items-center justify-content-center"><svg width="22" height="20" viewBox="0 0 22 20"><path d="M1 1H9L11 4H21V18H1Z" fill="#f7d36b"/><path d="M1 7H21V18H1Z" fill="#f2c94c"/><path d="M8 18V12H14V18" fill="#2f9be0"/></svg></div>
 <div class="tapp d-flex align-items-center justify-content-center"><svg width="26" height="24" viewBox="0 0 26 24"><rect x="3" y="2" width="16" height="6" fill="#3a8a60"/><rect x="1" y="5" width="20" height="15" fill="#8cc4ee" stroke="#668"/><rect x="11" y="12" width="14" height="10" fill="#f5dc9a" stroke="#765"/><path d="M11 12 18 18 25 12" fill="none" stroke="#765"/></svg></div>
 <div class="tapp d-flex align-items-center justify-content-center"><svg width="24" height="24" viewBox="0 0 24 24"><circle cx="12" cy="12" r="11" fill="#e0161e"/><ellipse cx="12" cy="12" rx="5" ry="8" fill="#101619"/></svg></div>
 <div class="tapp d-flex align-items-center justify-content-center"><svg width="22" height="24" viewBox="0 0 22 24"><rect x="1" y="2" width="20" height="20" fill="#4a9bc8"/><circle cx="11" cy="12" r="7" fill="#f58220"/><path d="M9 8 15 12 9 16Z" fill="#fff"/></svg></div>
 <div class="tapp tcur d-flex align-items-center justify-content-center"><svg width="24" height="24" viewBox="0 0 24 24"><rect width="24" height="24" fill="#f3f3f3"/><polygon points="12,4 16,6 21,20 15,19 9,17 3,20" fill="#b4161b"/><polygon points="9,13 15,13 16,16 8,16" fill="#e05058"/></svg></div>
 <div class="d-flex ms-auto align-items-center">
  <div class="try d-flex justify-content-center"><svg width="13" height="8" viewBox="0 0 13 8"><path d="M1 7 6.500 1 12 7" fill="none" stroke="#fff"/></svg></div>
  <div class="try d-flex justify-content-center"><svg width="16" height="14" viewBox="0 0 16 14"><path d="M4 0V5M1 5H7V8H5V14" stroke="#ddd" fill="none"/><path d="M8 4H15V11H8" fill="none" stroke="#ddd"/><path d="M10 6 13 9M13 6 10 9" stroke="#ddd"/></svg></div>
  <div class="try d-flex justify-content-center"><svg width="16" height="14" viewBox="0 0 16 14"><path d="M1 13A12 12 0 0 1 13 1M4.500 13A8.500 8.500 0 0 1 13 4.500M8 13A5 5 0 0 1 13 8" fill="none" stroke="#ddd" stroke-width="1.200"/><rect x="11" y="10" width="3" height="3" fill="#ddd"/></svg></div>
  <div class="try d-flex justify-content-center"><svg width="16" height="14" viewBox="0 0 16 14"><path d="M1 5H4L8 1V13L4 9H1Z" fill="none" stroke="#ddd"/><path d="M10 4A4 4 0 0 1 10 10M12 2A7 7 0 0 1 12 12" fill="none" stroke="#999"/></svg></div>
  <div class="try d-flex justify-content-center"><svg width="15" height="17" viewBox="0 0 15 17"><path d="M.5.5H14.500V12.500H9L7.500 15 6 12.500H.5Z" fill="none" stroke="#fff"/><path d="M3 4H12M3 7H12M3 10H9" stroke="#fff"/></svg></div>
  <div class="clk"><div>10:41</div><div>09.02.2016</div></div>
 </div>
</div>
<script src="https://cdn.jsdelivr.net/npm/bootstrap@5.3.0/dist/js/bootstrap.bundle.min.js"></script>
</body></html>
